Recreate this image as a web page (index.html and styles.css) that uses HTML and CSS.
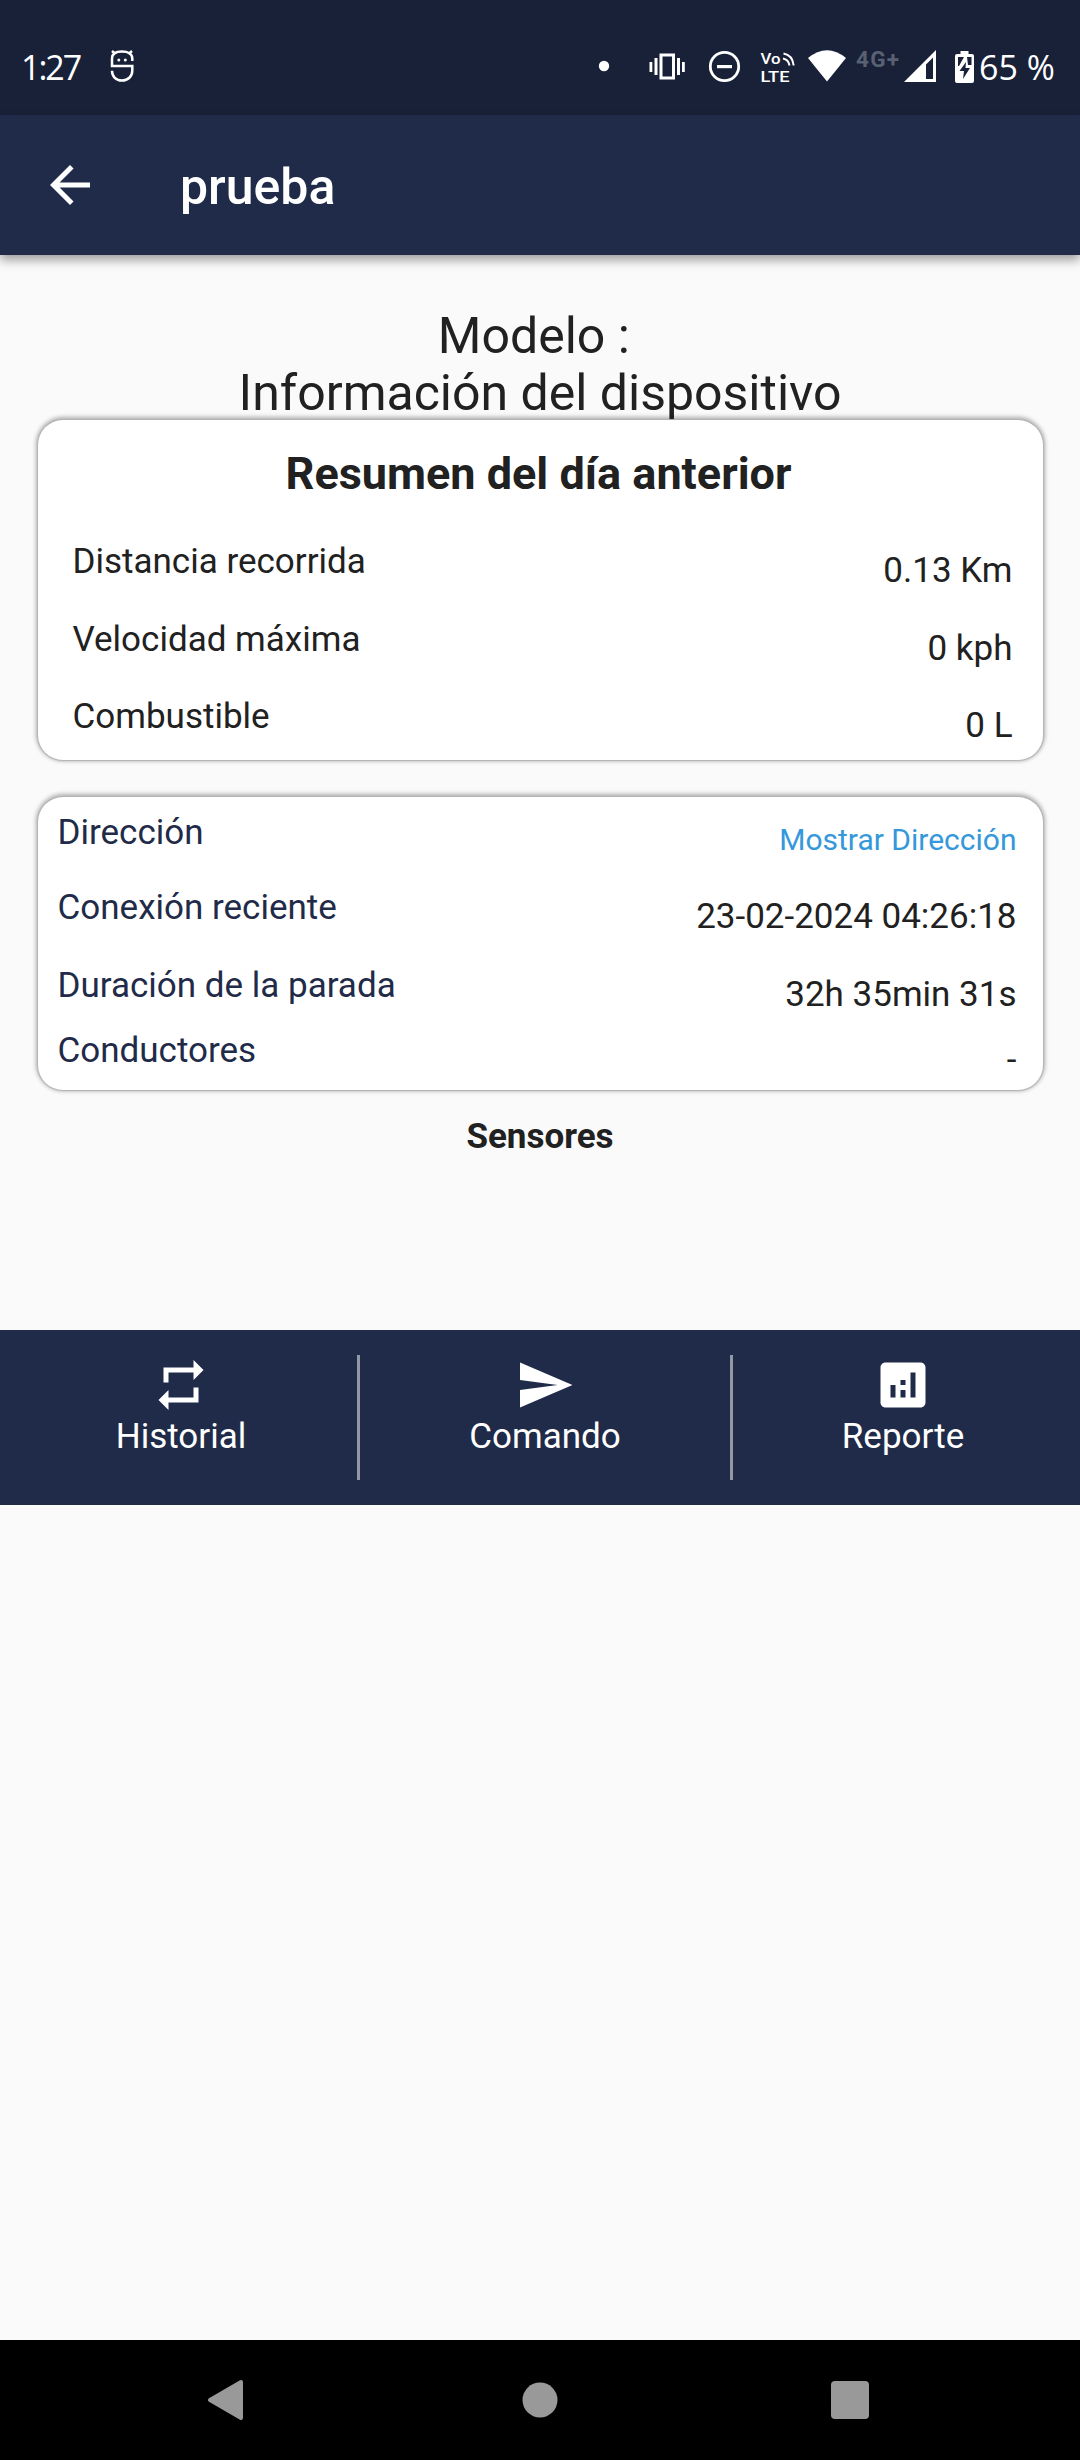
FILE: index.html
```html
<!DOCTYPE html>
<html lang="es">
<head>
<meta charset="utf-8">
<title>prueba</title>
<link rel="stylesheet" href="styles.css">
</head>
<body>
<div class="screen">
  <div class="status">
    <span class="clock">1:27</span>
    <svg class="app-mark" width="24" height="34" viewBox="0 0 24 34" fill="none" stroke="#fff" stroke-width="2.500"><path d="M22.300 12V9.500C22.300 5 18 2.600 12 2.600S2 5 2 9.500V17H22.300V21.500C22.300 27.500 18 31.500 12 31.500S2 27.500 2 21.800"/><path d="M2 2l3.500 3M22 2l-3.500 3"/><circle cx="8.800" cy="11" r="1.500" fill="#fff" stroke="none"/><circle cx="15.300" cy="11" r="1.500" fill="#fff" stroke="none"/></svg>
    <svg class="tray" width="360" height="40" viewBox="598 46 360 40" fill="#fff">
      <circle cx="604" cy="66" r="5.200"/>
      <path d="M661 55h12.500v23H661z" fill="none" stroke="#fff" stroke-width="3"/>
      <path d="M654.500 58h3v17h-3zM649.500 62h2.800v10h-2.800zM677 58h3v17h-3zM682 62h2.800v10H682z"/>
      <circle cx="724.500" cy="66.500" r="14.200" fill="none" stroke="#fff" stroke-width="2.800"/>
      <path d="M717 65h15v3.200h-15z"/>
      <text class="volte" x="760.500" y="63.500" textLength="20" lengthAdjust="spacingAndGlyphs">Vo</text>
      <text class="volte" x="760.500" y="81.500" textLength="29" lengthAdjust="spacingAndGlyphs">LTE</text>
      <path d="M783 58.500q5.500 1 6.500 7M783.500 53.500q9 1.500 10.200 12" fill="none" stroke="#fff" stroke-width="2"/>
      <path d="M808 58q19-15.500 38 0L827 81.500z"/>
      <text class="net" x="856" y="66.500" textLength="43">4G+</text>
      <path fill-rule="evenodd" d="M936 50v32h-32zM933 57.500l-7 7V79h7z"/>
    </svg>
    <svg class="battery" width="20" height="34" viewBox="0 0 20 34"><path fill="#fff" d="M5.500 1h8v3H17q2 0 2 2v25q0 2-2 2H2q-2 0-2-2V6q0-2 2-2h3.500z"/><path fill="#182138" d="M3 7h6L4 16H3zM12 7h4.500v8H13zM11 12L4.500 21H9l-1 8 7-11h-4.500z"/></svg>
    <span class="percent">65 %</span>
  </div>
  <header class="appbar">
    <svg width="60" height="60" viewBox="0 0 24 24" fill="#fff"><path d="M20 11H7.830l5.590-5.590L12 4l-8 8 8 8 1.410-1.410L7.830 13H20v-2z"/></svg>
    <h1>prueba</h1>
  </header>
  <main class="content">
    <div class="model"><p>Modelo :&nbsp;</p><p>Información del dispositivo</p></div>
    <section class="card summary">
      <h2>Resumen del día anterior</h2>
      <div class="row"><span>Distancia recorrida</span><span class="value">0.13 Km</span></div>
      <div class="row"><span>Velocidad máxima</span><span class="value">0 kph</span></div>
      <div class="row"><span>Combustible</span><span class="value">0 L</span></div>
    </section>
    <section class="card details">
      <div class="row address"><span>Dirección</span><a class="value link">Mostrar Dirección</a></div>
      <div class="row"><span>Conexión reciente</span><span class="value">23-02-2024 04:26:18</span></div>
      <div class="row stop"><span>Duración de la parada</span><span class="value">32h 35min 31s</span></div>
      <div class="row"><span>Conductores</span><span class="value">-</span></div>
    </section>
    <h3>Sensores</h3>
  </main>
  <nav class="actions">
    <div class="action history"><svg width="60" height="60" viewBox="0 0 24 24" fill="#fff"><path d="M7 7h10v3l4-4-4-4v3H5v6h2V7zm10 10H7v-3l-4 4 4 4v-3h12v-6h-2v4z"/></svg><span>Historial</span></div>
    <i class="divider"></i>
    <div class="action"><svg width="60" height="60" viewBox="0 0 24 24" fill="#fff"><path d="M2.010 21L23 12 2.010 3 2 10l15 2-15 2z"/></svg><span>Comando</span></div>
    <i class="divider"></i>
    <div class="action report"><svg width="60" height="60" viewBox="0 0 24 24" fill="#fff"><path d="M19 3H5c-1.100 0-2 .9-2 2v14c0 1.100.9 2 2 2h14c1.100 0 2-.9 2-2V5c0-1.100-.9-2-2-2zM9 17H7v-5h2v5zm4 0h-2v-3h2v3zm0-5h-2v-2h2v2zm4 5h-2V7h2v10z"/></svg><span>Reporte</span></div>
  </nav>
  <footer class="sysnav">
    <svg width="1080" height="120" viewBox="0 0 1080 120" fill="#999"><path stroke="#999" stroke-width="4" stroke-linejoin="round" d="M210 60l31-18v36z"/><circle cx="540" cy="60" r="17.500"/><rect x="831" y="41" width="38" height="38" rx="4"/></svg>
  </footer>
</div>
</body>
</html>
```
FILE: styles.css
```css
* { box-sizing: border-box; }
body { margin: 0; background: #fafafa; font-family: Roboto, sans-serif; color: #212121; }
h1, h2, h3, p { margin: 0; }
svg { display: block; flex: none; }
.screen { width: 1080px; height: 2460px; display: flex; flex-direction: column; overflow: hidden; }

.status { height: 115px; background: #182138; display: flex; align-items: flex-start; color: #fff; white-space: nowrap; font: 500 34px/46px "Open Sans", sans-serif; }
.clock { width: 89px; margin: 44px 0 0 21px; letter-spacing: -2px; }
.app-mark { margin-top: 49px; }
.tray { margin: 46px 0 0 464px; }
.battery { margin: 50px 4px 0 -3px; }
.percent { margin-top: 44px; }
.volte { font: 500 15px Roboto, sans-serif; }
.net { font: 700 22.5px Roboto, sans-serif; fill: #596073; }

.appbar { height: 140px; background: #1f2b48; color: #fff; display: flex; align-items: center; padding-left: 40px; gap: 80px; box-shadow: 0 5px 10px rgba(0,0,0,.38); z-index: 1; }
.appbar h1 { font-size: 50px; font-weight: 500; line-height: 60px; padding-top: 4px; }

.content { height: 1075px; padding: 53px 37.5px 0; }
.model { height: 112px; text-align: center; font-size: 50px; line-height: 57px; }
.card { background: #fff; border-radius: 25px; box-shadow: 0 0 1px 1px #b4b4b4, 0 -1px 4px 2px rgba(0,0,0,.3); position: relative; }
.summary { height: 340px; padding: 27px 30px 0 35px; }
.summary h2 { text-align: center; font-size: 45px; line-height: 54px; margin: 0 8px 40px 0; }
.row { display: flex; justify-content: space-between; font-size: 35px; line-height: 41px; height: 77.5px; }
.value { padding-top: 9px; }
.details { height: 293px; margin-top: 37px; padding: 15px 26px 0 20px; color: #1f2b48; }
.details .value { color: #212121; }
.details .address { height: 75px; }
.details .address .link { color: #3498db; font-size: 30px; padding-top: 7px; }
.details .stop { height: 65px; }
h3 { text-align: center; font-size: 35px; line-height: 41px; margin-top: 26px; }

.actions { height: 175px; background: #1f2b48; color: #fff; display: grid; grid-template-columns: 357px 3px 370px 3px 1fr; align-items: start; padding-top: 25px; font-size: 35px; line-height: 43px; }
.action { display: flex; flex-direction: column; align-items: center; }
.history { padding-left: 5px; }
.report { padding-right: 7px; }
.divider { height: 125px; background: #9298a5; }

.sysnav { height: 120px; margin-top: auto; background: #000; }
```
